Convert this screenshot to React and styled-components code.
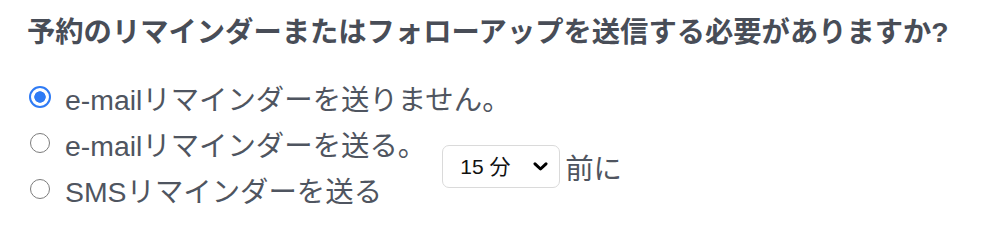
import React, { useState } from "react";
import styled, { createGlobalStyle } from "styled-components";

const GlobalStyle = createGlobalStyle`
  body {
    margin: 0;
    background: #ffffff;
    font-family: "Liberation Sans", "Noto Sans CJK JP", sans-serif;
  }
`;

const Container = styled.div`
  padding: 15px 27px 0 27px;
`;

const Heading = styled.h2`
  margin: 0 0 25px 0;
  font-size: 28.3px;
  line-height: 34px;
  font-weight: 700;
  color: #484d57;
  white-space: nowrap;
`;

const Option = styled.label`
  display: flex;
  align-items: center;
  height: 46px;
  font-size: 28.4px;
  color: #4f5560;
  white-space: nowrap;
  cursor: pointer;
`;

const Radio = styled.input.attrs({ type: "radio" })`
  appearance: none;
  margin: 0 15px 0 3px;
  width: 20px;
  height: 20px;
  box-sizing: border-box;
  border-radius: 50%;
  border: 1.6px solid #7c7c7c;
  background: #fff;
  flex-shrink: 0;

  &:checked {
    width: 22px;
    height: 22px;
    margin: 0 14px 0 2px;
    border: 2.6px solid #2f7bf5;
    background: radial-gradient(circle, #2f7bf5 0 5.4px, #fff 6px);
  }
`;

const SendRow = styled.div`
  display: flex;
  align-items: center;
`;

const Group = styled.div`
  display: flex;
  flex-direction: column;
`;

const Select = styled.select`
  appearance: none;
  margin-left: 16px;
  width: 118px;
  height: 43px;
  padding: 0 0 0 17px;
  border: 1px solid #dadada;
  border-radius: 7px;
  font-family: "Liberation Sans", "Noto Sans CJK JP", sans-serif;
  font-size: 21px;
  color: #111;
  background: #fff url("data:image/svg+xml;utf8,<svg xmlns='http://www.w3.org/2000/svg' width='15' height='9' viewBox='0 0 15 9'><path d='M2 1.8 L7.5 7 L13 1.8' fill='none' stroke='black' stroke-width='3' stroke-linecap='round' stroke-linejoin='round'/></svg>")
    no-repeat right 11px center;
  outline: none;
`;

const Suffix = styled.span`
  margin-left: 5px;
  font-size: 28.4px;
  color: #4f5560;
`;

export default function App() {
  const [choice, setChoice] = useState("none");
  const [minutes, setMinutes] = useState("15");

  return (
    <>
      <GlobalStyle />
      <Container>
        <Heading>予約のリマインダーまたはフォローアップを送信する必要がありますか?</Heading>
        <Option>
          <Radio
            name="reminder"
            checked={choice === "none"}
            onChange={() => setChoice("none")}
          />
          e-mailリマインダーを送りません。
        </Option>
        <SendRow>
          <Group>
            <Option>
              <Radio
                name="reminder"
                checked={choice === "email"}
                onChange={() => setChoice("email")}
              />
              e-mailリマインダーを送る。
            </Option>
            <Option>
              <Radio
                name="reminder"
                checked={choice === "sms"}
                onChange={() => setChoice("sms")}
              />
              SMSリマインダーを送る
            </Option>
          </Group>
          <Select value={minutes} onChange={(e) => setMinutes(e.target.value)}>
            <option value="5">5 分</option>
            <option value="15">15 分</option>
            <option value="30">30 分</option>
            <option value="60">60 分</option>
          </Select>
          <Suffix>前に</Suffix>
        </SendRow>
      </Container>
    </>
  );
}
